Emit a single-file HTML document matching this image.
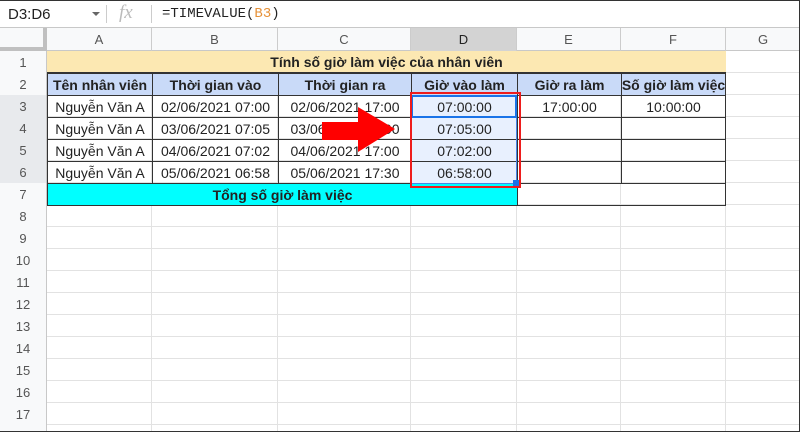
<!DOCTYPE html>
<html><head><meta charset="utf-8"><style>
*{margin:0;padding:0;box-sizing:border-box}
body{width:800px;height:432px;overflow:hidden;background:#fff;font-family:"Liberation Sans",Arial,sans-serif;position:relative}
.a{position:absolute}
.c{position:absolute;display:flex;align-items:center;justify-content:center;font-size:14px;color:#222;white-space:nowrap;overflow:hidden}
.b{font-weight:bold}
.h{color:#555;font-size:13px}
</style></head><body>
<!-- formula bar -->
<div class="a" style="left:0;top:0;width:800px;height:28px;background:#fff;border-bottom:1px solid #c8c8c8"></div>
<div class="a" style="left:8px;top:6px;font-size:15px;color:#222">D3:D6</div>
<div class="a" style="left:92px;top:12px;width:0;height:0;border-left:4px solid transparent;border-right:4px solid transparent;border-top:4px solid #666"></div>
<div class="a" style="left:106px;top:5px;width:1px;height:18px;background:#ccc"></div>
<div class="a" style="left:119px;top:2px;font-family:'Liberation Serif',serif;font-style:italic;font-size:19px;color:#bbb">fx</div>
<div class="a" style="left:151px;top:5px;width:1px;height:18px;background:#ccc"></div>
<div class="a" style="left:162px;top:6px;font-family:'Liberation Mono',monospace;font-size:14px;color:#222">=TIMEVALUE(<span style="color:#e69138">B3</span>)</div>
<!-- grid background -->
<div class="a" style="left:47px;top:51px;width:753px;height:381px;background:
repeating-linear-gradient(to bottom,transparent 0,transparent 21px,#e2e2e2 21px,#e2e2e2 22px)"></div>
<div class="a" style="left:151px;top:51px;width:1px;height:381px;background:#e2e2e2"></div>
<div class="a" style="left:277px;top:51px;width:1px;height:381px;background:#e2e2e2"></div>
<div class="a" style="left:410px;top:51px;width:1px;height:381px;background:#e2e2e2"></div>
<div class="a" style="left:516px;top:51px;width:1px;height:381px;background:#e2e2e2"></div>
<div class="a" style="left:620px;top:51px;width:1px;height:381px;background:#e2e2e2"></div>
<div class="a" style="left:725px;top:51px;width:1px;height:381px;background:#e2e2e2"></div>
<!-- column headers -->
<div class="a" style="left:0;top:28px;width:800px;height:23px;background:#f8f9fa;border-bottom:1px solid #c8c8c8"></div>
<div class="a" style="left:0;top:28px;width:47px;height:23px;background:#f8f9fa;border-right:4px solid #c0c0c0;border-bottom:4px solid #c0c0c0"></div>
<div class="c h" style="left:47px;top:28px;width:105px;height:23px;border-right:1px solid #ccc">A</div>
<div class="c h" style="left:152px;top:28px;width:126px;height:23px;border-right:1px solid #ccc">B</div>
<div class="c h" style="left:278px;top:28px;width:133px;height:23px;border-right:1px solid #ccc">C</div>
<div class="c h" style="left:411px;top:28px;width:106px;height:23px;border-right:1px solid #ccc;background:#d3d3d3;color:#222">D</div>
<div class="c h" style="left:517px;top:28px;width:104px;height:23px;border-right:1px solid #ccc">E</div>
<div class="c h" style="left:621px;top:28px;width:105px;height:23px;border-right:1px solid #ccc">F</div>
<div class="c h" style="left:726px;top:28px;width:74px;height:23px">G</div>
<!-- row headers -->
<div class="a" style="left:0;top:51px;width:47px;height:381px;background:#f8f9fa;border-right:1px solid #c8c8c8"></div>
<div class="c h" style="left:0;top:51px;width:46px;height:22px">1</div>
<div class="c h" style="left:0;top:73px;width:46px;height:22px">2</div>
<div class="c h" style="left:0;top:95px;width:46px;height:22px;background:#e8eaed">3</div>
<div class="c h" style="left:0;top:117px;width:46px;height:22px;background:#e8eaed">4</div>
<div class="c h" style="left:0;top:139px;width:46px;height:22px;background:#e8eaed">5</div>
<div class="c h" style="left:0;top:161px;width:46px;height:22px;background:#e8eaed">6</div>
<div class="c h" style="left:0;top:183px;width:46px;height:22px">7</div>
<div class="c h" style="left:0;top:205px;width:46px;height:22px">8</div>
<div class="c h" style="left:0;top:227px;width:46px;height:22px">9</div>
<div class="c h" style="left:0;top:249px;width:46px;height:22px">10</div>
<div class="c h" style="left:0;top:271px;width:46px;height:22px">11</div>
<div class="c h" style="left:0;top:293px;width:46px;height:22px">12</div>
<div class="c h" style="left:0;top:315px;width:46px;height:22px">13</div>
<div class="c h" style="left:0;top:337px;width:46px;height:22px">14</div>
<div class="c h" style="left:0;top:359px;width:46px;height:22px">15</div>
<div class="c h" style="left:0;top:381px;width:46px;height:22px">16</div>
<div class="c h" style="left:0;top:403px;width:46px;height:22px">17</div>
<!-- row1 -->
<div class="c b" style="left:47px;top:51px;width:679px;height:22px;background:#fce8b2;border-bottom:1px solid #333">Tính số giờ làm việc của nhân viên</div>
<!-- row2 -->
<div class="c b" style="left:47px;top:73px;width:106px;height:23px;background:#c9daf8;border:1px solid #333">Tên nhân viên</div>
<div class="c b" style="left:152px;top:73px;width:127px;height:23px;background:#c9daf8;border:1px solid #333">Thời gian vào</div>
<div class="c b" style="left:278px;top:73px;width:134px;height:23px;background:#c9daf8;border:1px solid #333">Thời gian ra</div>
<div class="c b" style="left:411px;top:73px;width:107px;height:23px;background:#c9daf8;border:1px solid #333">Giờ vào làm</div>
<div class="c b" style="left:517px;top:73px;width:105px;height:23px;background:#c9daf8;border:1px solid #333">Giờ ra làm</div>
<div class="c b" style="left:621px;top:73px;width:105px;height:23px;background:#c9daf8;border:1px solid #333">Số giờ làm việc</div>
<!-- data rows -->
<div class="c" style="left:47px;top:95px;width:106px;height:23px;border:1px solid #333">Nguyễn Văn A</div>
<div class="c" style="left:152px;top:95px;width:127px;height:23px;border:1px solid #333">02/06/2021 07:00</div>
<div class="c" style="left:278px;top:95px;width:134px;height:23px;border:1px solid #333">02/06/2021 17:00</div>
<div class="c" style="left:411px;top:95px;width:107px;height:23px;border:1px solid #333;background:#e8f0fe">07:00:00</div>
<div class="c" style="left:517px;top:95px;width:105px;height:23px;border:1px solid #333">17:00:00</div>
<div class="c" style="left:621px;top:95px;width:105px;height:23px;border:1px solid #333">10:00:00</div>

<div class="c" style="left:47px;top:117px;width:106px;height:23px;border:1px solid #333">Nguyễn Văn A</div>
<div class="c" style="left:152px;top:117px;width:127px;height:23px;border:1px solid #333">03/06/2021 07:05</div>
<div class="c" style="left:278px;top:117px;width:134px;height:23px;border:1px solid #333">03/06/2021 17:00</div>
<div class="c" style="left:411px;top:117px;width:107px;height:23px;border:1px solid #333;background:#e8f0fe">07:05:00</div>
<div class="c" style="left:517px;top:117px;width:105px;height:23px;border:1px solid #333"></div>
<div class="c" style="left:621px;top:117px;width:105px;height:23px;border:1px solid #333"></div>

<div class="c" style="left:47px;top:139px;width:106px;height:23px;border:1px solid #333">Nguyễn Văn A</div>
<div class="c" style="left:152px;top:139px;width:127px;height:23px;border:1px solid #333">04/06/2021 07:02</div>
<div class="c" style="left:278px;top:139px;width:134px;height:23px;border:1px solid #333">04/06/2021 17:00</div>
<div class="c" style="left:411px;top:139px;width:107px;height:23px;border:1px solid #333;background:#e8f0fe">07:02:00</div>
<div class="c" style="left:517px;top:139px;width:105px;height:23px;border:1px solid #333"></div>
<div class="c" style="left:621px;top:139px;width:105px;height:23px;border:1px solid #333"></div>

<div class="c" style="left:47px;top:161px;width:106px;height:23px;border:1px solid #333">Nguyễn Văn A</div>
<div class="c" style="left:152px;top:161px;width:127px;height:23px;border:1px solid #333">05/06/2021 06:58</div>
<div class="c" style="left:278px;top:161px;width:134px;height:23px;border:1px solid #333">05/06/2021 17:30</div>
<div class="c" style="left:411px;top:161px;width:107px;height:23px;border:1px solid #333;background:#e8f0fe">06:58:00</div>
<div class="c" style="left:517px;top:161px;width:105px;height:23px;border:1px solid #333"></div>
<div class="c" style="left:621px;top:161px;width:105px;height:23px;border:1px solid #333"></div>
<!-- row7 -->
<div class="c b" style="left:47px;top:183px;width:471px;height:23px;background:#00ffff;border:1px solid #333">Tổng số giờ làm việc</div>
<div class="c" style="left:517px;top:183px;width:209px;height:23px;border:1px solid #333"></div>
<!-- selection -->
<div class="a" style="left:411px;top:95px;width:106px;height:89px;border:1px solid #4a86e8"></div>
<div class="a" style="left:411px;top:95px;width:106px;height:23px;border:2px solid #1a73e8"></div>
<div class="a" style="left:513px;top:180px;width:6px;height:6px;background:#1a73e8"></div>
<div class="a" style="left:410px;top:92px;width:111px;height:96px;border:2px solid #ee1c1c"></div>
<!-- arrow -->
<svg class="a" style="left:0;top:0" width="800" height="432"><polygon points="322,122 358,122 358,107 395,129 358,152 358,140 322,140" fill="#f00"/></svg>
<div class="a" style="left:0;top:0;width:800px;height:432px;border:1px solid #333;border-left:none"></div>
</body></html>
